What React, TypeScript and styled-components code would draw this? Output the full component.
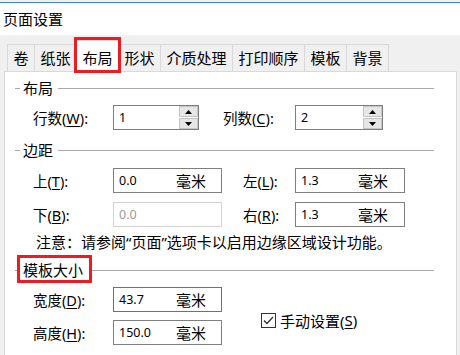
import React from "react";
import styled, { createGlobalStyle } from "styled-components";

const FONT = `"Noto Sans", "Noto Sans CJK SC", sans-serif`;

const GlobalStyle = createGlobalStyle`
  html, body {
    margin: 0;
    padding: 0;
    background: #fff;
  }
  body {
    font-family: ${FONT};
  }
`;

const Window = styled.div`
  width: 460px;
  height: 355px;
  overflow: hidden;
  display: flex;
  flex-direction: column;
  background: #f0f0f0;
  font-family: ${FONT};
  color: #000;
`;

const TitleBar = styled.div`
  background: #fff;
  margin-top: 2px;
  border-top: 1px solid #3f86c6;
  height: 32px;
  line-height: 32px;
  padding-left: 3px;
  font-size: 15px;
`;

const TabStrip = styled.div`
  height: 36px;
  display: flex;
  align-items: flex-end;
  padding-left: 8px;
`;

const Tab = styled.div<{ $active?: boolean }>`
  position: relative;
  box-sizing: border-box;
  height: ${(p) => (p.$active ? "32px" : "27px")};
  margin: ${(p) => (p.$active ? "0 -2px -1px -3px" : "0 0 0 -1px")};
  padding: ${(p) => (p.$active ? "4px 7.5px 0" : "0 5.5px")};
  border: 1px solid #d9d9d9;
  border-bottom: none;
  background: ${(p) => (p.$active ? "#fff" : "#f0f0f0")};
  z-index: ${(p) => (p.$active ? 2 : 1)};
  font-size: 15px;
  line-height: 26px;
  white-space: nowrap;

  &::after {
    content: "";
    display: ${(p) => (p.$active ? "block" : "none")};
    position: absolute;
    left: -1px;
    right: -1px;
    top: -4px;
    bottom: -1px;
    border: 3px solid #ec1c24;
  }
`;

const Panel = styled.div`
  flex: 1;
  position: relative;
  z-index: 1;
  margin: 0 3px 0 4px;
  background: #fff;
  border: 1px solid #d9d9d9;
  border-bottom: none;
  padding-right: 22px;
`;

const SectionHeader = styled.div<{ $top: number }>`
  display: flex;
  align-items: center;
  height: 20px;
  margin-top: ${(p) => p.$top}px;
  padding-left: 10px;

  &::before {
    content: "";
    width: 5px;
    height: 1px;
    background: #a8a8a8;
    margin-right: 3px;
  }

  &::after {
    content: "";
    flex: 1;
    height: 1px;
    background: #a8a8a8;
    margin-left: 5px;
  }
`;

const SectionTitle = styled.span<{ $marked?: boolean }>`
  position: relative;
  font-size: 15px;
  line-height: 20px;
  padding-right: ${(p) => (p.$marked ? "4px" : "0")};

  &::after {
    content: "";
    display: ${(p) => (p.$marked ? "block" : "none")};
    position: absolute;
    left: -6px;
    right: -5px;
    top: -5px;
    bottom: -3px;
    border: 3px solid #ec1c24;
  }
`;

const Row = styled.div<{ $top: number }>`
  display: flex;
  align-items: center;
  height: 25px;
  margin-top: ${(p) => p.$top}px;
  padding-left: 28px;
`;

const Label = styled.span<{ $width: number; $gap?: number }>`
  width: ${(p) => p.$width}px;
  margin-left: ${(p) => p.$gap ?? 0}px;
  font-size: 14.5px;
  white-space: nowrap;
`;

const Key = styled.span`
  text-decoration: underline;
  text-underline-offset: 2px;
`;

const Field = styled.div<{ $width: number; $state?: "focus" | "disabled" }>`
  box-sizing: border-box;
  width: ${(p) => p.$width}px;
  height: 25px;
  display: flex;
  align-items: center;
  padding-left: 5px;
  border: 1px solid
    ${(p) =>
      p.$state === "focus"
        ? "#3a7dbb"
        : p.$state === "disabled"
        ? "#d2d2d2"
        : "#7f7f7f"};
  color: ${(p) => (p.$state === "disabled" ? "#9a9a9a" : "#000")};
  background: #fff;
`;

const Value = styled.span`
  width: 57px;
  font-size: 12.5px;
`;

const Unit = styled.span`
  font-size: 15px;
`;

const SpinButtons = styled.div`
  margin-left: auto;
  width: 19px;
  height: 23px;
  display: flex;
  flex-direction: column;
  gap: 1px;
`;

const SpinButton = styled.div`
  flex: 1;
  display: flex;
  align-items: center;
  justify-content: center;
  background: #e6e6e6;
  border: 1px solid #c4c4c4;
  box-sizing: border-box;
`;

const Note = styled.div`
  margin-top: 5px;
  padding-left: 31px;
  font-size: 15px;
  line-height: 20px;
  white-space: nowrap;
`;

const SizeArea = styled.div`
  display: flex;
  align-items: center;
`;

const SizeFields = styled.div`
  display: flex;
  flex-direction: column;
`;

const CheckRow = styled.label`
  display: flex;
  align-items: center;
  margin-left: 39px;
  margin-top: 15px;
  font-size: 15px;
`;

const CheckBox = styled.span`
  box-sizing: border-box;
  width: 15px;
  height: 15px;
  border: 1px solid #333;
  display: flex;
  align-items: center;
  justify-content: center;
  margin-right: 4px;
`;

const Arrow = ({ up }: { up?: boolean }) => (
  <svg width="7" height="4" viewBox="0 0 7 4">
    <polygon points={up ? "0,4 7,4 3.5,0" : "0,0 7,0 3.5,4"} fill="#000" />
  </svg>
);

const Spinner: React.FC<{ width: number; value: string }> = ({
  width,
  value,
}) => (
  <Field $width={width}>
    <Value>{value}</Value>
    <SpinButtons>
      <SpinButton>
        <Arrow up />
      </SpinButton>
      <SpinButton>
        <Arrow />
      </SpinButton>
    </SpinButtons>
  </Field>
);

const tabs = ["卷", "纸张", "布局", "形状", "介质处理", "打印顺序", "模板", "背景"];

export default function App() {
  return (
    <>
      <GlobalStyle />
      <Window>
        <TitleBar>页面设置</TitleBar>
        <TabStrip>
          {tabs.map((t) => (
            <Tab key={t} $active={t === "布局"}>
              {t}
            </Tab>
          ))}
        </TabStrip>
        <Panel>
          <SectionHeader $top={6}>
            <SectionTitle>布局</SectionTitle>
          </SectionHeader>
          <Row $top={7}>
            <Label $width={80}>
              行数(<Key>W</Key>):
            </Label>
            <Spinner width={86} value="1" />
            <Label $width={72} $gap={24}>
              列数(<Key>C</Key>):
            </Label>
            <Spinner width={88} value="2" />
          </Row>

          <SectionHeader $top={10}>
            <SectionTitle>边距</SectionTitle>
          </SectionHeader>
          <Row $top={8}>
            <Label $width={80}>
              上(<Key>T</Key>):
            </Label>
            <Field $width={109}>
              <Value>0.0</Value>
              <Unit>毫米</Unit>
            </Field>
            <Label $width={52} $gap={21}>
              左(<Key>L</Key>):
            </Label>
            <Field $width={110}>
              <Value>1.3</Value>
              <Unit>毫米</Unit>
            </Field>
          </Row>
          <Row $top={9}>
            <Label $width={80}>
              下(<Key>B</Key>):
            </Label>
            <Field $width={109} $state="disabled">
              <Value>0.0</Value>
            </Field>
            <Label $width={52} $gap={21}>
              右(<Key>R</Key>):
            </Label>
            <Field $width={110}>
              <Value>1.3</Value>
              <Unit>毫米</Unit>
            </Field>
          </Row>
          <Note>注意：请参阅“页面”选项卡以启用边缘区域设计功能。</Note>

          <SectionHeader $top={8}>
            <SectionTitle $marked>模板大小</SectionTitle>
          </SectionHeader>
          <SizeArea>
            <SizeFields>
              <Row $top={7}>
                <Label $width={80}>
                  宽度(<Key>D</Key>):
                </Label>
                <Field $width={109} $state="focus">
                  <Value>43.7</Value>
                  <Unit>毫米</Unit>
                </Field>
              </Row>
              <Row $top={8}>
                <Label $width={80}>
                  高度(<Key>H</Key>):
                </Label>
                <Field $width={109}>
                  <Value>150.0</Value>
                  <Unit>毫米</Unit>
                </Field>
              </Row>
            </SizeFields>
            <CheckRow>
              <CheckBox>
                <svg width="11" height="9" viewBox="0 0 11 9">
                  <polyline
                    points="1,4.5 4,7.5 10,1"
                    fill="none"
                    stroke="#333"
                    strokeWidth="1.3"
                  />
                </svg>
              </CheckBox>
              手动设置(<Key>S</Key>)
            </CheckRow>
          </SizeArea>
        </Panel>
      </Window>
    </>
  );
}
